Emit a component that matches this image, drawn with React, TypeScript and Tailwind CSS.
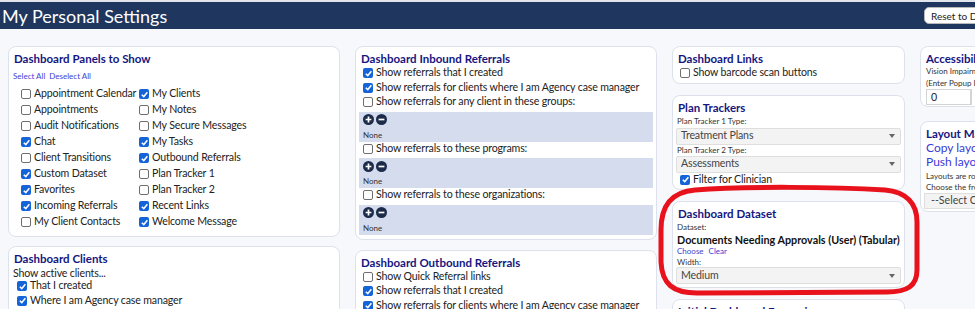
import React from "react";

type Item = { label: string; on?: boolean };

const Check = ({ on }: { on?: boolean }) => (
  <span
    className={`inline-flex items-center justify-center w-[10px] h-[10px] rounded-[2px] shrink-0 ${
      on ? "bg-[#1464d8]" : "bg-white border border-[#707070]"
    }`}
  >
    {on && (
      <svg viewBox="0 0 10 10" className="w-[9px] h-[9px]">
        <path d="M2 5.2 L4.2 7.3 L8.2 2.6" stroke="white" strokeWidth="1.7" fill="none" />
      </svg>
    )}
  </span>
);

const CheckRow = ({ label, on, h = "h-[14.5px]" }: Item & { h?: string }) => (
  <div className={`flex items-center gap-[3px] whitespace-nowrap text-[10.6px] tracking-[-0.15px] ${h}`}>
    <Check on={on} />
    <span>{label}</span>
  </div>
);

const Panel = ({
  title,
  children,
  className = "",
}: {
  title: string;
  children?: React.ReactNode;
  className?: string;
}) => (
  <div className={`bg-white border border-[#dce1ec] rounded-[8px] px-[3px] pt-[4px] ${className}`}>
    <h3 className="px-[2px] text-[11.5px] font-bold leading-[15px] text-[#16167f] whitespace-nowrap">
      {title}
    </h3>
    {children}
  </div>
);

const Select = ({ value, className = "" }: { value: string; className?: string }) => (
  <div
    className={`flex items-center justify-between h-[17px] bg-[#f3f3f3] border border-[#dedede] rounded-[2px] pl-[4px] pr-[5px] text-[10.6px] tracking-[-0.15px] text-[#444] whitespace-nowrap ${className}`}
  >
    <span>{value}</span>
    <span className="w-0 h-0 border-l-[3px] border-r-[3px] border-t-[4px] border-l-transparent border-r-transparent border-t-[#666]" />
  </div>
);

const PlusMinus = () => (
  <div className="flex items-center gap-[2px] h-[12px]">
    <svg viewBox="0 0 11 11" className="w-[11px] h-[11px]">
      <circle cx="5.5" cy="5.5" r="5.5" fill="#1d2b4a" />
      <path d="M2.6 5.5 H8.4 M5.5 2.6 V8.4" stroke="white" strokeWidth="1.7" />
    </svg>
    <svg viewBox="0 0 11 11" className="w-[11px] h-[11px]">
      <circle cx="5.5" cy="5.5" r="5.5" fill="#1d2b4a" />
      <path d="M2.6 5.5 H8.4" stroke="white" strokeWidth="1.7" />
    </svg>
  </div>
);

const PickBox = () => (
  <div className="h-[30px] bg-[#d4dcee] pl-[4px] pt-[2px]">
    <PlusMinus />
    <div className="mt-[3px] text-[8px] leading-[12px] text-[#333]">None</div>
  </div>
);

const panelsLeft: Item[] = [
  { label: "Appointment Calendar" },
  { label: "Appointments" },
  { label: "Audit Notifications" },
  { label: "Chat", on: true },
  { label: "Client Transitions" },
  { label: "Custom Dataset", on: true },
  { label: "Favorites", on: true },
  { label: "Incoming Referrals", on: true },
  { label: "My Client Contacts" },
];

const panelsRight: Item[] = [
  { label: "My Clients", on: true },
  { label: "My Notes" },
  { label: "My Secure Messages" },
  { label: "My Tasks", on: true },
  { label: "Outbound Referrals", on: true },
  { label: "Plan Tracker 1" },
  { label: "Plan Tracker 2" },
  { label: "Recent Links", on: true },
  { label: "Welcome Message", on: true },
];

export default function App() {
  return (
    <div className="relative w-[975px] h-[309px] overflow-hidden bg-[#f7f8fc] font-['Lato','Noto_Sans',sans-serif] text-[#222]">
      <header className="flex items-center h-[29px] border-t-2 border-[#e2e5eb] bg-[#1f365f]">
        <h1 className="w-[924px] shrink-0 pl-[2px] text-[18px] leading-none text-white">
          My Personal Settings
        </h1>
        <button className="shrink-0 h-[17px] px-[6px] bg-white border border-[#b8b8b8] rounded-[5px] text-[10px] leading-none text-[#222] whitespace-nowrap">
          Reset to Defaults
        </button>
      </header>

      <div className="flex items-start gap-[15px] pl-[8px] pt-[17px]">
        {/* column 1 */}
        <div className="flex flex-col gap-[9px] w-[332px] shrink-0">
          <Panel title="Dashboard Panels to Show" className="pb-[6px]">
            <div className="mt-[3px] flex gap-[4px] px-[1px] text-[8px] leading-[14px] text-[#4141d6]">
              <span>Select All</span>
              <span>Deselect All</span>
            </div>
            <div className="mt-[3px] flex pl-[9px]">
              <div className="w-[118px]">
                {panelsLeft.map((p) => (
                  <CheckRow key={p.label} {...p} h="h-[16px]" />
                ))}
              </div>
              <div>
                {panelsRight.map((p) => (
                  <CheckRow key={p.label} {...p} h="h-[16px]" />
                ))}
              </div>
            </div>
          </Panel>
          <Panel title="Dashboard Clients" className="pb-[14px]">
            <div className="mt-[1px] pl-[1px] text-[10.6px] tracking-[-0.15px] leading-[12px]">
              Show active clients...
            </div>
            <div className="pl-[5px]">
              <CheckRow label="That I created" on h="h-[14.5px]" />
              <CheckRow label="Where I am Agency case manager" on h="h-[14.5px]" />
            </div>
          </Panel>
        </div>

        {/* column 2 */}
        <div className="flex flex-col gap-[10px] w-[302px] shrink-0">
          <Panel title="Dashboard Inbound Referrals" className="pb-[4px]">
            <div className="pl-[4px]">
              <CheckRow label="Show referrals that I created" on />
              <CheckRow label="Show referrals for clients where I am Agency case manager" on />
              <CheckRow label="Show referrals for any client in these groups:" />
            </div>
            <div className="mt-[2px]">
              <PickBox />
            </div>
            <div className="pl-[4px]">
              <CheckRow label="Show referrals to these programs:" />
            </div>
            <div className="mt-[2px]">
              <PickBox />
            </div>
            <div className="pl-[4px]">
              <CheckRow label="Show referrals to these organizations:" />
            </div>
            <div className="mt-[2px]">
              <PickBox />
            </div>
          </Panel>
          <Panel title="Dashboard Outbound Referrals" className="pb-[5px]">
            <div className="pl-[4px]">
              <CheckRow label="Show Quick Referral links" />
              <CheckRow label="Show referrals that I created" on />
              <CheckRow label="Show referrals for clients where I am Agency case manager" on />
            </div>
          </Panel>
        </div>

        {/* column 3 */}
        <div className="flex flex-col gap-[11px] w-[233px] shrink-0">
          <Panel title="Dashboard Links" className="pb-[2px]">
            <div className="pl-[4px]">
              <CheckRow label="Show barcode scan buttons" />
            </div>
          </Panel>
          <Panel title="Plan Trackers" className="pb-[1.5px]">
            <div className="px-[1px] text-[8px] leading-[13px] text-[#333]">Plan Tracker 1 Type:</div>
            <Select value="Treatment Plans" />
            <div className="px-[1px] text-[8px] leading-[11px] text-[#333]">Plan Tracker 2 Type:</div>
            <Select value="Assessments" />
            <div className="pl-[4px]">
              <CheckRow label="Filter for Clinician" on />
            </div>
          </Panel>
          <Panel title="Dashboard Dataset" className="pb-[3px]">
            <div className="px-[1px] text-[8px] leading-[12px] text-[#333]">Dataset:</div>
            <div className="px-[1px] text-[10.8px] font-bold leading-[13px] whitespace-nowrap text-[#111]">
              Documents Needing Approvals (User) (Tabular)
            </div>
            <div className="flex gap-[5px] px-[1px] text-[8px] leading-[11px] text-[#4141d6]">
              <span>Choose</span>
              <span>Clear</span>
            </div>
            <div className="px-[1px] text-[8px] leading-[10.5px] text-[#333]">Width:</div>
            <Select value="Medium" />
          </Panel>
          <Panel title="Initial Dashboard Expansion" className="h-[40px]" />
        </div>

        {/* column 4 */}
        <div className="flex flex-col gap-[14px] w-[200px] shrink-0">
          <Panel title="Accessibility" className="pb-[1px]">
            <div className="px-[2px] text-[8px] leading-[11px] text-[#333] whitespace-nowrap">
              Vision Impairment Mode
            </div>
            <div className="px-[2px] text-[8px] leading-[12px] text-[#333] whitespace-nowrap">
              (Enter Popup Help Level)
            </div>
            <div className="flex pl-[2px]">
              <div className="w-[45px] h-[16px] border border-[#d4d4d4] bg-white pl-[4px] text-[10.6px] leading-[14px]">
                0
              </div>
              <div className="w-[60px] h-[16px] border-l border-[#d4d4d4]" />
            </div>
          </Panel>
          <Panel title="Layout Management" className="pb-[2px]">
            <div className="px-[2px] text-[12px] leading-[13.5px] text-[#3a3ad8] whitespace-nowrap">
              Copy layout to users
            </div>
            <div className="px-[2px] text-[12px] leading-[13.5px] text-[#3a3ad8] whitespace-nowrap">
              Push layout to roles
            </div>
            <div className="mt-[2.5px] px-[2px] text-[8px] leading-[11px] text-[#333] whitespace-nowrap">
              Layouts are role based defaults.
            </div>
            <div className="px-[2px] text-[8px] leading-[11px] text-[#333] whitespace-nowrap">
              Choose the from user below:
            </div>
            <div className="mt-[0.5px] pl-[2px] flex items-center h-[16px] border border-[#dedede] bg-[#f3f3f3] text-[10.6px] text-[#444]">
              <span className="pl-[4px]">--Select One--</span>
            </div>
          </Panel>
        </div>
      </div>

      {/* red annotation around Dashboard Dataset */}
      <svg
        className="absolute left-[655px] top-[182px] w-[270px] h-[118px] pointer-events-none"
        viewBox="0 0 270 118"
      >
        <path
          d="M40 8 C90 4 180 5 230 8 C252 10 262 22 262 40 L262 88 C262 104 252 110 232 110 L42 111 C18 111 7 102 6 80 L6 48 C6 24 16 10 40 8 Z"
          fill="none"
          stroke="#e8121c"
          strokeWidth="5"
        />
      </svg>
    </div>
  );
}
